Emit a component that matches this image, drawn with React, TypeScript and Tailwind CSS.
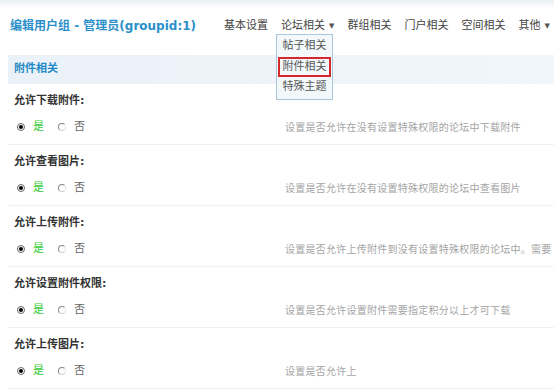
import React from 'react';

const ROWS = [
    { label: '允许下载附件:', desc: '设置是否允许在没有设置特殊权限的论坛中下载附件' },
    { label: '允许查看图片:', desc: '设置是否允许在没有设置特殊权限的论坛中查看图片' },
    { label: '允许上传附件:', desc: '设置是否允许上传附件到没有设置特殊权限的论坛中。需要' },
    { label: '允许设置附件权限:', desc: '设置是否允许设置附件需要指定积分以上才可下载' },
    { label: '允许上传图片:', desc: '设置是否允许上' },
];

const MENU = ['基本设置', '论坛相关', '群组相关', '门户相关', '空间相关', '其他'];

function Radio({ checked }: { checked: boolean }) {
    return checked ? (
        <span className="shrink-0 w-[8px] h-[8px] rounded-full border border-[#666] flex items-center justify-center">
            <span className="w-[4px] h-[4px] rounded-full bg-black" />
        </span>
    ) : (
        <span className="shrink-0 block w-[8px] h-[8px] rounded-full border border-[#888] border-r-[#e6e6e6] border-b-[#cfcfcf]" />
    );
}

export default function App() {
    return (
        <div className="w-[554px] h-[389px] overflow-hidden bg-white relative" style={{ fontFamily: '"DejaVu Sans", "Noto Sans CJK SC", sans-serif' }}>
            {/* top strip */}
            <div className="h-[8px] bg-gradient-to-b from-[#eaf0f4] to-white" />

            {/* header */}
            <div className="h-[44px] flex items-center pl-[10px] pb-[8px]">
                <h1 className="text-[12px] font-bold text-[#2a8fca] whitespace-nowrap w-[214px]">编辑用户组 - 管理员(groupid:1)</h1>
                <nav className="flex items-center gap-[13px] text-[11px] text-[#444] whitespace-nowrap">
                    {MENU.map((m) => (
                        <span key={m} className="flex items-center gap-[4px]">
                            {m}
                            {(m === '论坛相关' || m === '其他') && <span className="text-[7px] text-[#555]">▼</span>}
                        </span>
                    ))}
                </nav>
            </div>

            {/* dropdown */}
            <div className="absolute left-[276px] top-[34px] w-[57px] h-[66px] bg-[#f3f8fb] border border-[#a9c6da] p-[1px] flex flex-col text-[11px] text-[#555] z-10">
                <div className="h-[21px] flex items-center justify-center">帖子相关</div>
                <div className="h-[21px] flex items-center justify-center border-2 border-[#d4282c]">附件相关</div>
                <div className="h-[21px] flex items-center justify-center">特殊主题</div>
            </div>

            <div className="ml-[8px] mt-[3px]">
                {/* section band */}
                <div className="h-[29px] bg-gradient-to-r from-[#eaf1f8] to-[#f1f6fa] flex items-center pl-[6px] text-[11px] font-bold text-[#1f8ac5]">
                    附件相关
                </div>

                {ROWS.map((r) => (
                    <div key={r.label} className="h-[61px] border-b border-[#f1f1f1] pl-[6px]">
                        <div className="h-[34px] flex items-center text-[11px] font-bold text-[#333]">{r.label}</div>
                        <div className="h-[18px] flex items-center text-[11px]">
                            <div className="w-[271px] flex items-center pl-[3px]">
                                <Radio checked />
                                <span className="ml-[8px] text-[#33cc33]">是</span>
                                <span className="ml-[14px] flex items-center"><Radio checked={false} /></span>
                                <span className="ml-[8px] text-[#666]">否</span>
                            </div>
                            <div className="flex-1 whitespace-nowrap overflow-hidden text-[10px] tracking-[0.25px] text-[#a4a4a4]">{r.desc}</div>
                        </div>
                    </div>
                ))}
            </div>
        </div>
    );
}
